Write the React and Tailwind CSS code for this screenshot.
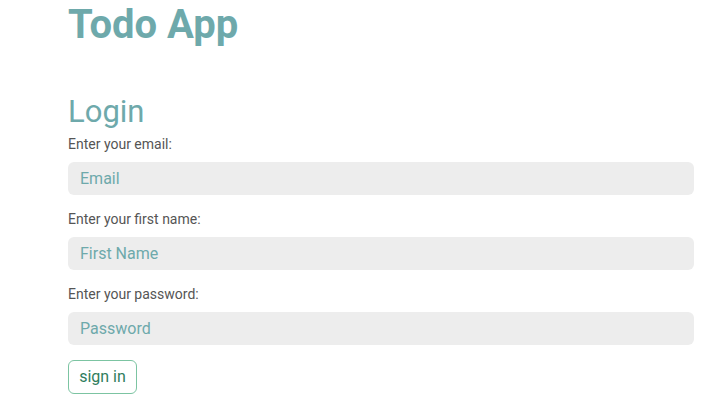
import React from "react";

const fields = [
  { label: "Enter your email:", placeholder: "Email", type: "email" },
  { label: "Enter your first name:", placeholder: "First Name", type: "text" },
  { label: "Enter your password:", placeholder: "Password", type: "password" },
];

export default function App() {
  return (
    <div
      className="min-h-screen bg-white pl-[68px] pr-[34px]"
      style={{ fontFamily: 'Roboto, "Noto Sans", sans-serif' }}
    >
      <h1 className="text-[40px] font-bold leading-[48px] text-[#6ea9ab] pt-[1px]">Todo App</h1>

      <h2 className="mt-[43px] text-[31px] leading-[40px] text-[#6ea9ab]">Login</h2>

      <form className="flex flex-col" onSubmit={(e) => e.preventDefault()}>
        {fields.map((f, i) => (
          <div key={f.placeholder} className={i === 0 ? "mt-[2px]" : "mt-[14px]"}>
            <label className="block text-[14px] leading-[20px] text-[#555]">{f.label}</label>
            <input
              type={f.type}
              placeholder={f.placeholder}
              className="mt-[8px] block h-[33px] w-full rounded-[6px] bg-[#ededed] px-[12px] text-[16px] text-[#333] outline-none placeholder:text-[#6ea9ab]"
            />
          </div>
        ))}
        <div className="mt-[15px]">
          <button
            type="submit"
            className="h-[34px] w-[69px] rounded-[6px] border border-[#7cc4a2] bg-white text-[16px] text-[#2f7d5c]"
          >
            sign in
          </button>
        </div>
      </form>
    </div>
  );
}
